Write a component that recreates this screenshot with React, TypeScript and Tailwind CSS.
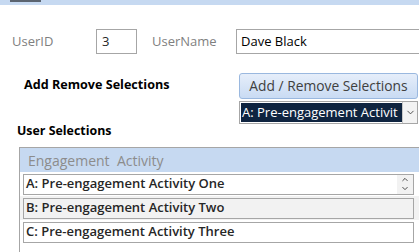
import { ChevronDown, ChevronUp } from 'lucide-react';

const font = { fontFamily: '"Open Sans", "Noto Sans", sans-serif' };

export default function App() {
    return (
        <div className="w-[419px] h-[252px] overflow-hidden bg-white text-[#262626]" style={font}>
            {/* top band */}
            <div className="h-[5px] bg-[#c6d9f1]">
                <div className="ml-[10px] w-[31px] h-[2px] bg-[#5b6470]" />
            </div>

            {/* UserID / UserName */}
            <div className="flex items-center h-[25px] mt-[24px]">
                <span className="ml-[12px] w-[84px] text-[13px] text-[#7f7f7f]">UserID</span>
                <div className="w-[41px] h-[25px] border border-[#a6a6a6] pl-[5px] flex items-center text-[13px]">3</div>
                <span className="ml-[15px] w-[84px] text-[13px] text-[#7f7f7f]">UserName</span>
                <div className="flex-1 h-[25px] border border-[#a6a6a6] border-r-0 pl-[4px] flex items-center text-[13px] text-black">
                    Dave Black
                </div>
            </div>

            {/* Add / Remove */}
            <div className="flex mt-[19px]">
                <div className="w-[239px] pl-[24px] pt-[3px] text-[12.6px] font-bold text-black">Add Remove Selections</div>
                <div className="flex flex-col">
                    <button className="w-[179px] h-[26px] rounded-[3px] border border-[#9ab8df] bg-gradient-to-b from-[#e6eefa] to-[#c9dbf3] text-[13.8px] text-[#404040]">
                        Add / Remove Selections
                    </button>
                    <div className="mt-[2px] w-[179px] h-[23px] border border-[#a6a6a6] flex items-center">
                        <div className="w-[161px] h-[19px] ml-[1px] bg-[#0f2440] text-white text-[13px] leading-[19px] pl-[1px] overflow-hidden whitespace-nowrap">
                            A: Pre-engagement Activit
                        </div>
                        <div className="flex-1 h-full flex items-center justify-center border-l border-[#c8c8c8] bg-[#f3f3f3]">
                            <ChevronDown className="w-[11px] h-[11px] text-[#444]" strokeWidth={2} />
                        </div>
                    </div>
                </div>
            </div>

            <div className="pl-[17px] -mt-[2px] text-[12.4px] font-bold text-black leading-[18px]">User Selections</div>

            {/* subform */}
            <div className="ml-[19px] mt-[7px] h-[110px] border-l border-t border-[#a6a6a6]">
                <div className="h-[24px] bg-[#c6d9f1] pl-[8px] flex items-center text-[14px] text-[#8c8c8c]">
                    Engagement&nbsp; Activity
                </div>
                <div className="h-[24px] flex items-center pl-[3px] pr-[5px]">
                    <div className="flex-1 h-[21px] border border-[#a6a6a6] flex items-center pl-[2px] text-[13px] font-semibold">
                        <span className="flex-1 whitespace-nowrap">A: Pre-engagement Activity One</span>
                        <div className="w-[16px] h-full flex flex-col items-center justify-center bg-[#f2f2f2]">
                            <ChevronUp className="w-[10px] h-[9px] text-[#404040]" strokeWidth={2.5} />
                            <ChevronDown className="w-[10px] h-[9px] text-[#404040]" strokeWidth={2.5} />
                        </div>
                    </div>
                </div>
                <div className="h-[24px] flex items-center pl-[3px] pr-[5px] bg-[#f2f2f2]">
                    <div className="flex-1 h-[21px] border border-[#a6a6a6] flex items-center pl-[2px] text-[13px] font-semibold">
                        B: Pre-engagement Activity Two
                    </div>
                </div>
                <div className="h-[24px] flex items-center pl-[3px] pr-[5px]">
                    <div className="flex-1 h-[21px] border border-[#a6a6a6] flex items-center pl-[2px] text-[13px] font-semibold">
                        C: Pre-engagement Activity Three
                    </div>
                </div>
            </div>
        </div>
    );
}
